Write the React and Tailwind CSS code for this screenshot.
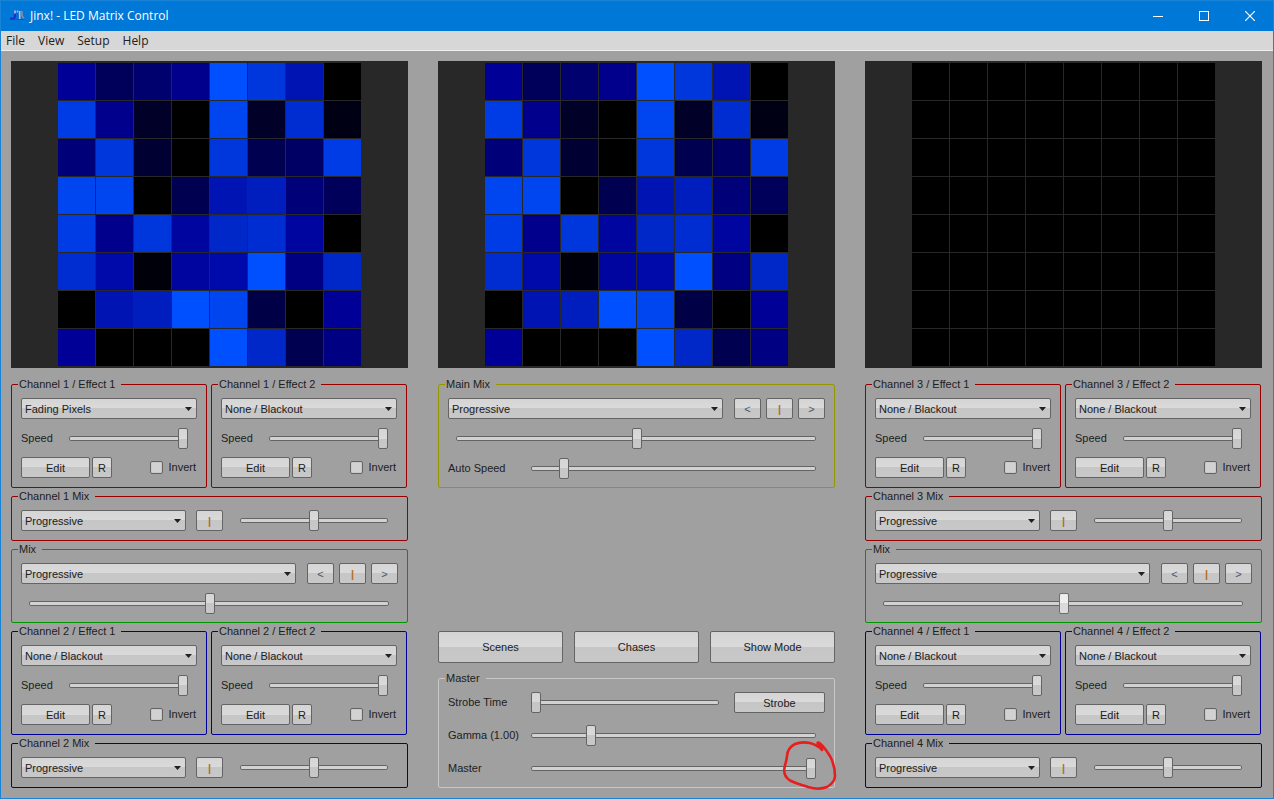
import React, { useId } from 'react';

const MENU_ITEMS = ['File', 'View', 'Setup', 'Help'];

const FADING_PIXELS = [
  ['#000096', '#00005a', '#00006e', '#00008c', '#0050ff', '#0037dc', '#0014b4', '#000000'],
  ['#003ce6', '#00008c', '#000028', '#000000', '#0046f0', '#000028', '#002dd2', '#000014'],
  ['#000078', '#0037dc', '#000032', '#000000', '#0037dc', '#000050', '#000064', '#003ce6'],
  ['#0046f0', '#0046f0', '#000000', '#000050', '#0014b4', '#001ebe', '#000078', '#00005a'],
  ['#003ce6', '#00008c', '#0037dc', '#0005a0', '#0028c8', '#002dd2', '#0005a0', '#000000'],
  ['#002dd2', '#000aaa', '#00000a', '#0005a0', '#000aaa', '#0050ff', '#000082', '#0028c8'],
  ['#000000', '#0014b4', '#001ebe', '#0050ff', '#0046f0', '#000046', '#000000', '#000096'],
  ['#000096', '#000000', '#000000', '#000000', '#0050ff', '#0028c8', '#000050', '#000082'],
];

const BLACKOUT = Array.from({ length: 8 }, () => Array(8).fill('#000000'));

const FACE =
  'border border-[#646464] rounded-[2px] bg-[linear-gradient(#d5d5d5,#dadada_50%,#c6c6c6_50%,#c8c8c8)]';

const GROUP_COLORS = {
  red: 'border-[#960000]',
  green: 'border-[#009600]',
  blue: 'border-[#000096]',
  olive: 'border-[#969600]',
  light: 'border-[#c8c8c8]',
};

const AppIcon = () => (
  <svg className="w-4 h-4" viewBox="0 0 16 16" fill="none">
    <path d="M6 3v5.500c0 2-1.500 2.500-5 2" stroke="#1834c8" strokeWidth="2.2" />
    <path d="M6 2.500v3" stroke="#a8bce8" strokeWidth="1.800" />
    <path d="M8.500 5.500v5.500" stroke="#3850d0" strokeWidth="1.600" />
    <path d="M8.500 2.500v2" stroke="#d0a8a0" strokeWidth="1.600" />
    <path d="M10.700 3v8" stroke="#b8c4dc" strokeWidth="1.600" />
    <path d="M13 3v5l2 2.500" stroke="#8888a0" strokeWidth="1.800" />
    <path d="M5 11.500h10.500" stroke="#3448a0" strokeWidth="1" />
  </svg>
);

const TitleBar = () => (
  <header className="flex h-[30px] items-stretch bg-[#0078d7] text-white">
    <div className="flex flex-1 items-center gap-[5px] pl-2">
      <AppIcon />
      <h1 className="text-[12px]">Jinx! - LED Matrix Control</h1>
    </div>
    <button type="button" aria-label="Minimize" className="flex w-[46px] items-center justify-center">
      <svg width="10" height="10" viewBox="0 0 10 10" stroke="currentColor">
        <path d="M0 5.5h10" />
      </svg>
    </button>
    <button type="button" aria-label="Maximize" className="flex w-[46px] items-center justify-center">
      <svg width="10" height="10" viewBox="0 0 10 10" fill="none" stroke="currentColor">
        <rect x="0.5" y="0.5" width="9" height="9" />
      </svg>
    </button>
    <button type="button" aria-label="Close" className="flex w-[46px] items-center justify-center">
      <svg width="10" height="10" viewBox="0 0 10 10" stroke="currentColor" strokeWidth="1.2">
        <path d="M0 0l10 10M10 0L0 10" />
      </svg>
    </button>
  </header>
);

const MenuBar = () => (
  <nav className="flex h-5 items-center gap-[13px] border-b border-[#f0f0f0] bg-[#d7d7d7] pl-[5px] text-[12px] text-[#202020]">
    {MENU_ITEMS.map((item) => (
      <button key={item} type="button">
        {item}
      </button>
    ))}
  </nav>
);

const Matrix = ({ cells, label }) => (
  <div role="img" aria-label={label} className="flex justify-center bg-[#282828] py-[2px]">
    <div className="grid grid-cols-[repeat(8,37px)] auto-rows-[37px] gap-px">
      {cells.flat().map((color, i) => (
        <div key={i} style={{ backgroundColor: color }} />
      ))}
    </div>
  </div>
);

const Group = ({ title, color, className = 'pb-[9px]', children }) => (
  <fieldset className={`min-w-0 rounded-[2px] border px-[9px] pt-[7px] ${GROUP_COLORS[color]} ${className}`}>
    <legend className="-ml-[3px] pl-px pr-[6px] leading-[13px]">{title}</legend>
    {children}
  </fieldset>
);

const Button = ({ className = '', children, ...props }) => (
  <button type="button" className={`flex items-center justify-center ${FACE} ${className}`} {...props}>
    {children}
  </button>
);

const Combo = ({ label, value, className = '' }) => (
  <div className={`relative ${className}`}>
    <select
      aria-label={label}
      defaultValue={value}
      className={`block h-[21px] w-full appearance-none pl-[3px] pr-5 pt-[2px] outline-none ${FACE}`}
    >
      <option>{value}</option>
    </select>
    <svg
      className="pointer-events-none absolute right-[5px] top-[9px]"
      width="7"
      height="4"
      viewBox="0 0 7 4"
      fill="#202020"
    >
      <path d="M0 0h7L3.500 4z" />
    </svg>
  </div>
);

// The track outline is an inset shadow, so the thumb can reach both ends of the track.
const Slider = ({ value, className = '', ...props }) => (
  <input
    type="range"
    min="0"
    max="1000"
    defaultValue={value}
    className={`block h-[21px] min-w-0 appearance-none bg-transparent outline-none [&::-webkit-slider-runnable-track]:h-[5px] [&::-webkit-slider-runnable-track]:rounded-[2px] [&::-webkit-slider-runnable-track]:bg-[#d2d2d2] [&::-webkit-slider-runnable-track]:shadow-[inset_0_0_0_1px_#646464] [&::-webkit-slider-thumb]:-mt-2 [&::-webkit-slider-thumb]:h-[21px] [&::-webkit-slider-thumb]:w-[10px] [&::-webkit-slider-thumb]:appearance-none [&::-webkit-slider-thumb]:rounded-[2px] [&::-webkit-slider-thumb]:border [&::-webkit-slider-thumb]:border-[#646464] [&::-webkit-slider-thumb]:bg-[linear-gradient(#d5d5d5,#dadada_50%,#c6c6c6_50%,#c8c8c8)] ${className}`}
    {...props}
  />
);

const CenterButton = () => (
  <Button className="h-[21px] w-[27px] pt-px font-bold text-[#b46e28]" aria-label="Center">
    |
  </Button>
);

const Effect = ({ title, color, value }) => {
  const id = useId();
  return (
    <Group title={title} color={color}>
      <Combo label={`${title} type`} value={value} />
      <div className="mt-[9px] flex items-center pr-[9px]">
        <label htmlFor={`${id}-speed`} className="w-12">
          Speed
        </label>
        <Slider id={`${id}-speed`} value={1000} className="flex-1" />
      </div>
      <div className="mt-2 flex items-center gap-[2px]">
        <Button className="h-[21px] w-[69px] pt-[2px]">Edit</Button>
        <Button className="h-[21px] w-5 pt-[2px]">R</Button>
        <label className="ml-auto flex items-center gap-[5px] pr-px">
          <input
            type="checkbox"
            className="h-[13px] w-[13px] appearance-none rounded-[2px] border border-[#646464] bg-[#d2d2d2] shadow-[inset_0_0_0_1px_#c8c8c8] checked:bg-[#646464]"
          />
          Invert
        </label>
      </div>
    </Group>
  );
};

const ChannelMix = ({ title, color }) => (
  <Group title={title} color={color}>
    <div className="flex items-center gap-[10px]">
      <Combo label={`${title} mode`} value="Progressive" className="w-[165px]" />
      <CenterButton />
      <Slider aria-label={title} value={500} className="ml-[7px] mr-[10px] flex-1" />
    </div>
  </Group>
);

const Channel = ({ number, color, effect = 'None / Blackout' }) => (
  <>
    <div className="grid grid-cols-2 gap-1 pr-px">
      <Effect title={`Channel ${number} / Effect 1`} color={color} value={effect} />
      <Effect title={`Channel ${number} / Effect 2`} color={color} value="None / Blackout" />
    </div>
    <ChannelMix title={`Channel ${number} Mix`} color={color} />
  </>
);

const Mix = ({ title, color, active, children }) => (
  <Group title={title} color={color} className="pb-2">
    <div className="flex gap-[5px]">
      <Combo label={`${title} mode`} value="Progressive" className="mr-[6px] flex-1" />
      <Button className="h-[21px] w-[27px] pt-[2px] text-[#46586e]">&lt;</Button>
      <CenterButton />
      <Button className="h-[21px] w-[27px] pt-[2px] text-[#46586e]">&gt;</Button>
    </div>
    <div className="mt-[9px] flex pl-2 pr-[9px]">
      <Slider
        aria-label={title}
        value={503}
        className={active ? 'flex-1 [&::-webkit-slider-thumb]:brightness-110' : 'flex-1'}
      />
    </div>
    {children}
  </Group>
);

const LabeledSlider = ({ label, value, className = '', children }) => {
  const id = useId();
  return (
    <div className={`flex items-center ${className}`}>
      <label htmlFor={id} className="w-[83px]">
        {label}
      </label>
      <div className="relative flex flex-1">
        <Slider id={id} value={value} className="flex-1" />
        {children}
      </div>
    </div>
  );
};

const Annotation = () => (
  <svg
    className="pointer-events-none absolute -right-[34px] -top-7"
    width="80"
    height="69"
    viewBox="0 0 80 69"
    fill="none"
    stroke="#e61e1e"
    strokeWidth="2.6"
    strokeLinecap="round"
    strokeLinejoin="round"
  >
    <path d="M52 20C49 16 45 14.500 40 13C35 12 30 12 25 14C20 16.500 17.500 20 17 26C16.500 32 14.500 35 14.200 40C14 45 15.500 47.500 20 50.500C27 54 32 55 38 57C45 59 52 59 57 57C62 54 65 51 65 46C65 40 63.500 33 60.500 27C57.500 22 53 16 50 13.500C49 12.600 48 12.500 47.500 13C48 15 50 15.500 52.500 18.500" />
  </svg>
);

const Column = ({ children }) => <section className="flex min-w-0 flex-col">{children}</section>;

const OutputColumn = ({ cells, label, top, bottom, effect, active }) => (
  <Column>
    <Matrix cells={cells} label={label} />
    <div className="mt-[10px] flex flex-col gap-[2px]">
      <Channel number={top} color="red" effect={effect} />
      <Mix title="Mix" color="green" active={active} />
      <Channel number={bottom} color="blue" />
    </div>
  </Column>
);

const MainColumn = () => (
  <Column>
    <Matrix cells={FADING_PIXELS} label="Main output" />
    <div className="mt-[10px]">
      <Mix title="Main Mix" color="olive">
        <LabeledSlider label="Auto Speed" value={100} className="mt-[9px] pr-[9px]" />
      </Mix>
    </div>
    <div className="mt-auto flex justify-between">
      <Button className="h-8 w-[125px]">Scenes</Button>
      <Button className="h-8 w-[125px]">Chases</Button>
      <Button className="h-8 w-[125px]">Show Mode</Button>
    </div>
    <div className="mt-[9px]">
      <Group title="Master" color="light" className="pb-2">
        <div className="flex items-center gap-[15px]">
          <LabeledSlider label="Strobe Time" value={0} className="flex-1" />
          <Button className="h-[21px] w-[91px] pt-[2px]">Strobe</Button>
        </div>
        <LabeledSlider label="Gamma (1.00)" value={200} className="mt-3 pr-[9px]" />
        <LabeledSlider label="Master" value={1000} className="mt-3 pr-[9px]">
          <Annotation />
        </LabeledSlider>
      </Group>
    </div>
  </Column>
);

const App = () => (
  <div className="min-h-screen border border-[#1883d7] bg-[#a0a0a0] font-['Open_Sans',sans-serif]">
    <TitleBar />
    <MenuBar />
    <main className="grid grid-cols-3 gap-[30px] py-[10px] pl-[10px] pr-[11px] font-['Liberation_Sans',Arial,sans-serif] text-[11px] leading-[13px] text-[#202020]">
      <OutputColumn
        cells={FADING_PIXELS}
        label="Left output"
        top={1}
        bottom={2}
        effect="Fading Pixels"
      />
      <MainColumn />
      <OutputColumn cells={BLACKOUT} label="Right output" top={3} bottom={4} active />
    </main>
  </div>
);

export default App;
